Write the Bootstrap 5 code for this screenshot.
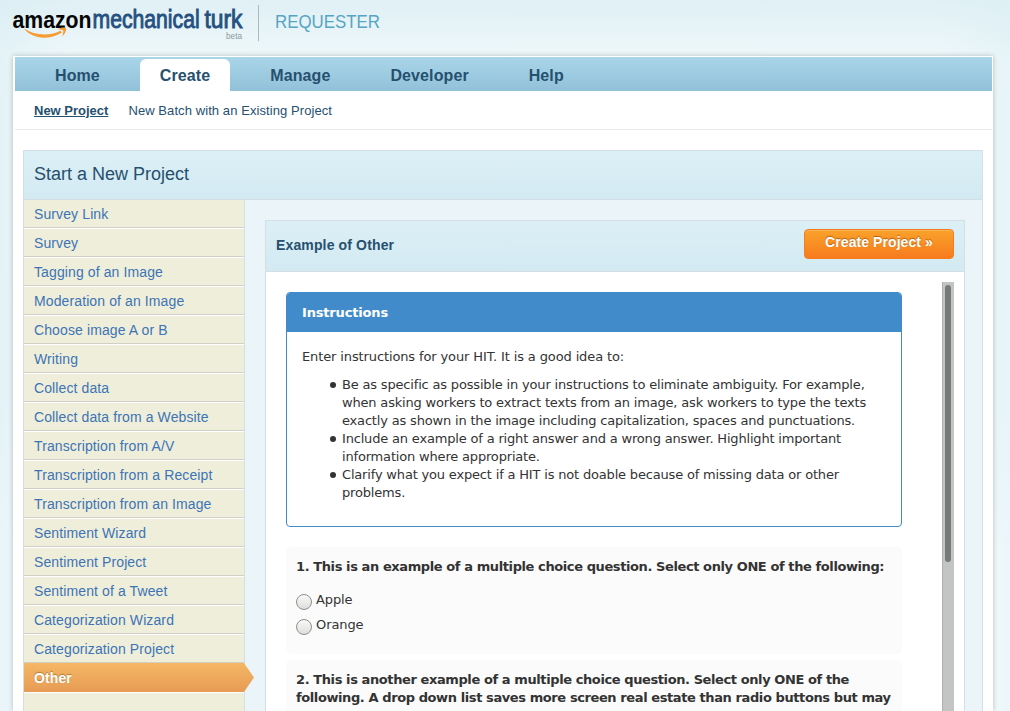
<!DOCTYPE html>
<html lang="en">
<head>
<meta charset="utf-8">
<meta name="viewport" content="width=device-width, initial-scale=1">
<title>Amazon Mechanical Turk - Requester</title>
<link href="https://cdn.jsdelivr.net/npm/bootstrap@5.3.0/dist/css/bootstrap.min.css" rel="stylesheet">
<style>
html, body { height: 711px; overflow: hidden; }
body { font-family: "Liberation Sans", Arial, sans-serif; color: #26506f; background: linear-gradient(90deg, rgba(216,237,244,.45), transparent 70px, transparent 940px, rgba(216,237,244,.35)), linear-gradient(#e0f0f5, #eff8fa 60px, #eef7fa 400px, #f7fbfd 550px, #f7fbfd); }
a { text-decoration: none; }
.masthead { height: 56px; }
.page-shell { width: 980px; height: 655px; margin-left: 13px; background: #fff; box-shadow: 0 0 5px rgba(0,0,0,.24); padding: 1px 1px 0 2px; }
.tabs { height: 34px; background: linear-gradient(#a9d5e9, #91c1d9); padding-left: 20px; padding-top: 2px; gap: 20px; }
.tabs .nav-link { height: 32px; padding: 0 20px; line-height: 33px; font-size: 16px; font-weight: bold; color: #26506f; border-radius: 6px 6px 0 0; letter-spacing: .1px; }
.tabs .nav-link.active { background: #fff; }
.subtabs { height: 39px; border-bottom: 1px solid #ebebeb; padding-left: 19px; gap: 20px; font-size: 13px; line-height: 39px; }
.subtabs a { color: #26506f; }
.subtabs a + a { letter-spacing: .08px; }
.project-box { width: 960px; height: 561px; margin: 20px 0 0 8px; border: 1px solid #d3dfe5; border-bottom: 0; background: #ebf4f8; overflow: hidden; }
.bar-head { background: linear-gradient(#dceff6, #d3eaf2); border-bottom: 1px solid #d3dfe5; }
.box-title { height: 49px; padding-left: 10px; font-size: 18px; line-height: 47px; }
.side { width: 221px; height: 512px; border-right: 1px solid #d3dfe5; background: #efeedb; }
.side .list-group-item { width: 220px; height: 29px; padding: 0 0 0 10px; border: 0; border-top: 1px solid #fff; border-bottom: 1px solid #d0d1c4; background: #efeedb; color: #3d74b5; font-size: 14px; line-height: 29px; letter-spacing: .11px; }
.side .list-group-item:first-child { height: 28px; border-top: 0; }
.side .list-group-item.active { position: relative; margin: 0; background: linear-gradient(#f4b765, #e79b54); border: 0; line-height: 31px; color: #fff; font-weight: bold; text-shadow: 0 -1px 1px rgba(100,60,0,.45); overflow: visible; }
.side .active svg { position: absolute; left: 220px; top: 0; }
.side-rest { border-top: 1px solid #fff; }
.example { width: 700px; height: 491px; margin: 20px 0 0 20px; border: 1px solid #d3dfe5; border-bottom: 0; background: #fff; }
.example-head { height: 51px; padding: 0 10px; }
.example-head h2 { font-size: 14px; font-weight: bold; margin: 0; line-height: 49px; letter-spacing: .14px; }
.btn-create { width: 150px; height: 30px; margin-top: 8px; padding: 0 0 4px; border: 1px solid #f47c20; border-radius: 4px; background: linear-gradient(#faa22a, #f77b1e); color: #fff; font-size: 14px; line-height: 22px; letter-spacing: .08px; font-weight: bold; text-shadow: 0 -1px 1px rgba(130,60,0,.6); box-shadow: inset 0 1px 0 #fbb253; }
.hit { font-family: "DejaVu Sans", Verdana, sans-serif; font-size: 13px; line-height: 18px; color: #333; width: 616px; height: 419px; margin: 20px 0 0 20px; }
.hit-card { height: 235px; border: 1px solid #428bca; border-radius: 4px; }
.hit-card .card-header { height: 39px; background: #428bca; color: #fff; font-weight: bold; padding: 0 15px; line-height: 39px; border: 0; border-radius: 3px 3px 0 0; letter-spacing: -.17px; }
.hit-card .card-body { padding: 16px 15px 0; color: #333; }
.hit-card p { letter-spacing: -.12px; margin-bottom: 10px; }
.hit-card ul { padding-left: 40px; margin: 0; list-style: none; letter-spacing: -.177px; }
.hit-card li { position: relative; }
.hit-card li::before { content: ""; position: absolute; left: -12px; top: 6px; width: 6px; height: 6px; border-radius: 50%; background: #333; }
.question { background: #fbfbfb; border-radius: 5px; padding: 11px 10px; }
.question p { letter-spacing: -.405px; margin-bottom: 15px; }
.q-one { height: 107px; margin-top: 20px; }
.q-two { height: 51px; margin-top: 6px; padding-bottom: 0; border-radius: 5px 5px 0 0; }
.choice { height: 25px; gap: 4px; letter-spacing: -.1px; }
.choice input { appearance: none; width: 16px; height: 16px; margin: 3px 0 0; border: 1px solid #8f908c; border-radius: 50%; background: linear-gradient(#f9f9f9, #dededc); }
.track { width: 12px; height: 429px; margin: 10px 10px 0 auto; background: #c3c4c4; border-left: 1px solid #aeb0b0; padding: 3px 3px 0 2px; }
.thumb { width: 6px; height: 277px; border-radius: 3px; background: #777a7a; }
</style>
</head>
<body>
<header class="masthead">
<svg width="400" height="56" viewBox="0 0 400 56" class="d-block" font-family="Liberation Sans, Arial, sans-serif">
<text transform="translate(12.5 27.5) scale(.76 1)" font-size="24.5" font-weight="bold" fill="#050505" textLength="104" lengthAdjust="spacingAndGlyphs">amazon</text>
<text transform="translate(92.5 27.5) scale(.76 1)" font-size="25" fill="#245180" stroke="#245180" stroke-width=".9" textLength="141" lengthAdjust="spacingAndGlyphs">mechanical</text>
<text transform="translate(204.5 27.5) scale(.76 1)" font-size="25" fill="#245180" stroke="#245180" stroke-width=".9" textLength="50" lengthAdjust="spacingAndGlyphs">turk</text>
<path d="M24 28.6 C34 35.2 48 37 60.5 30.8 L62 32.4 C49 40.5 32 39.5 24 28.6 Z" fill="#f79b34"/>
<path d="M57.5 29.3 C61 27.2 64.8 27.2 66 28.3 C66.6 30.7 64.9 34.2 62.4 36.2 C62.7 33.8 63.8 31.2 63.2 30.4 C62.4 29.7 60 30.1 57.5 29.3 Z" fill="#f79b34"/>
<text x="226" y="39" font-size="9" fill="#8e979b" textLength="16" lengthAdjust="spacingAndGlyphs">beta</text>
<rect x="258" y="5" width="1" height="36" fill="#adb9be"/>
<text x="275" y="28" font-size="18" fill="#57a5c4" textLength="105" lengthAdjust="spacingAndGlyphs">REQUESTER</text>
</svg>
</header>
<main class="page-shell">
<nav class="nav tabs flex-nowrap">
<a class="nav-link" href="#">Home</a><a class="nav-link active" href="#">Create</a><a class="nav-link" href="#">Manage</a><a class="nav-link" href="#">Developer</a><a class="nav-link" href="#">Help</a>
</nav>
<nav class="subtabs d-flex"><a href="#" class="fw-bold text-decoration-underline">New Project</a><a href="#">New Batch with an Existing Project</a></nav>
<section class="project-box">
<div class="bar-head box-title">Start a New Project</div>
<div class="d-flex">
<aside class="side flex-shrink-0">
<div class="list-group list-group-flush rounded-0">
<a href="#" class="list-group-item">Survey Link</a>
<a href="#" class="list-group-item">Survey</a>
<a href="#" class="list-group-item">Tagging of an Image</a>
<a href="#" class="list-group-item">Moderation of an Image</a>
<a href="#" class="list-group-item">Choose image A or B</a>
<a href="#" class="list-group-item">Writing</a>
<a href="#" class="list-group-item">Collect data</a>
<a href="#" class="list-group-item">Collect data from a Website</a>
<a href="#" class="list-group-item">Transcription from A/V</a>
<a href="#" class="list-group-item">Transcription from a Receipt</a>
<a href="#" class="list-group-item">Transcription from an Image</a>
<a href="#" class="list-group-item">Sentiment Wizard</a>
<a href="#" class="list-group-item">Sentiment Project</a>
<a href="#" class="list-group-item">Sentiment of a Tweet</a>
<a href="#" class="list-group-item">Categorization Wizard</a>
<a href="#" class="list-group-item">Categorization Project</a>
<a href="#" class="list-group-item active">Other<svg width="10" height="29"><defs><linearGradient id="arrow" x2="0" y2="1"><stop stop-color="#f4b765"/><stop offset="1" stop-color="#e79b54"/></linearGradient></defs><path d="M0 0L10 14.5L0 29Z" fill="url(#arrow)"/></svg></a>
</div>
<div class="side-rest"></div>
</aside>
<section class="example flex-shrink-0">
<div class="bar-head example-head d-flex justify-content-between"><h2>Example of Other</h2><button class="btn btn-create" type="button">Create Project »</button></div>
<div class="d-flex">
<div class="hit">
<div class="card hit-card"><div class="card-header">Instructions</div>
<div class="card-body"><p>Enter instructions for your HIT. It is a good idea to:</p>
<ul><li>Be as specific as possible in your instructions to eliminate ambiguity. For example, when asking workers to extract texts from an image, ask workers to type the texts exactly as shown in the image including capitalization, spaces and punctuations.</li><li>Include an example of a right answer and a wrong answer. Highlight important information where appropriate.</li><li>Clarify what you expect if a HIT is not doable because of missing data or other problems.</li></ul></div></div>
<div class="question q-one"><p class="fw-bold">1. This is an example of a multiple choice question. Select only ONE of the following:</p>
<label class="choice d-flex"><input type="radio" name="fruit">Apple</label><label class="choice d-flex"><input type="radio" name="fruit">Orange</label></div>
<div class="question q-two"><p class="fw-bold mb-0">2. This is another example of a multiple choice question. Select only ONE of the following. A drop down list saves more screen real estate than radio buttons but may</p></div>
</div>
<div class="track"><div class="thumb"></div></div>
</div>
</section>
</div>
</section>
</main>
<script src="https://cdn.jsdelivr.net/npm/bootstrap@5.3.0/dist/js/bootstrap.bundle.min.js"></script>
</body>
</html>
